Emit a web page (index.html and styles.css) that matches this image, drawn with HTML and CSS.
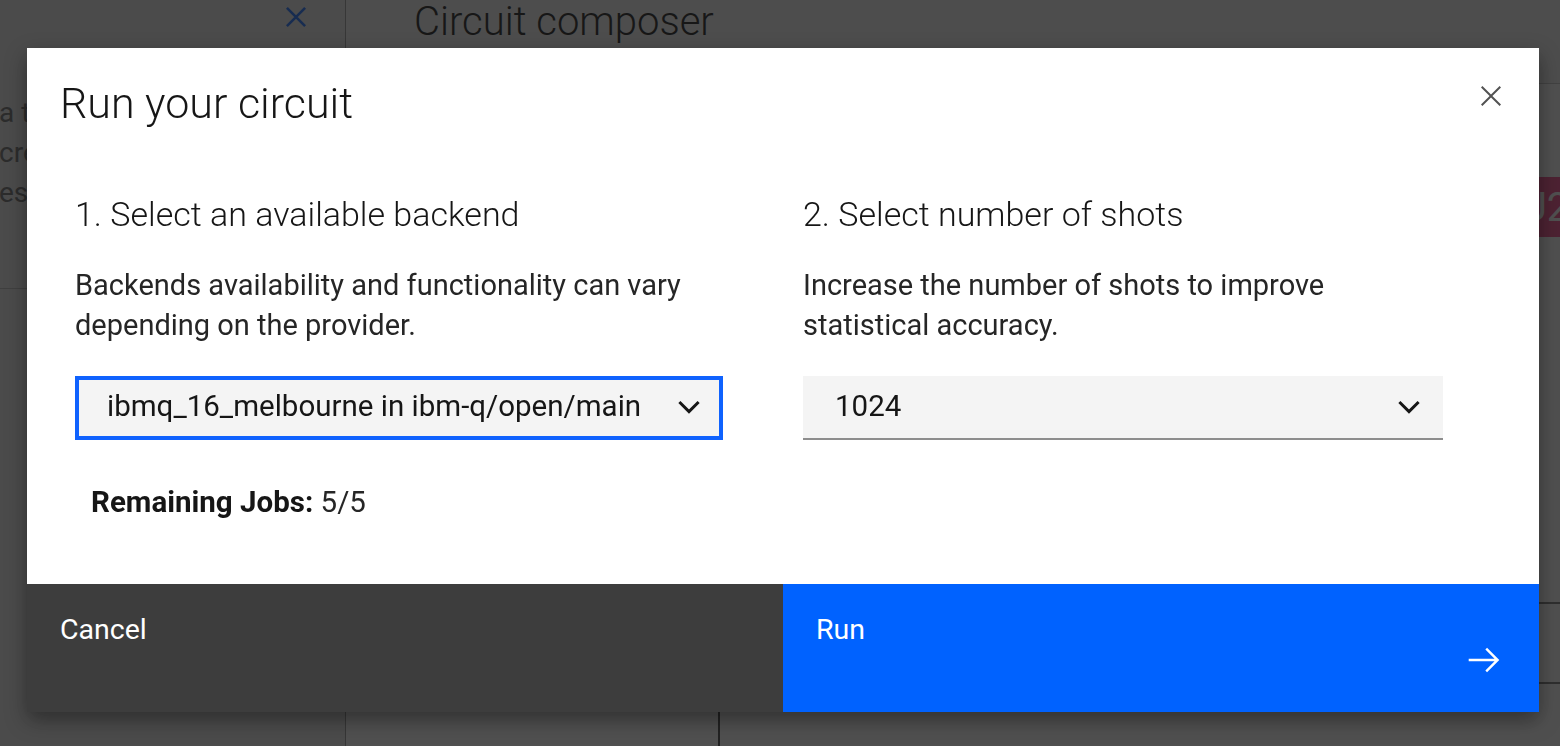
FILE: index.html
```html
<!DOCTYPE html>
<html lang="en">
<head>
<meta charset="utf-8">
<title>Run your circuit</title>
<link rel="stylesheet" href="styles.css">
</head>
<body>
<div class="app">
  <aside class="sidebar">
    <div class="sidebar-head">
      <button class="sidebar-close" aria-label="Close panel">
        <svg viewBox="0 0 20 20"><path d="M3 3L17 17M17 3L3 17"/></svg>
      </button>
    </div>
    <div class="sidebar-text">
      <span class="sidebar-line">a to</span>
      <span class="sidebar-line">cre</span>
      <span class="sidebar-line">es</span>
    </div>
    <div class="sidebar-rule"></div>
  </aside>
  <main class="workspace">
    <header class="ws-head"><h1 class="ws-title">Circuit composer</h1></header>
    <div class="ws-body">
      <div class="ws-panel"></div>
      <div class="ws-canvas">
        <div class="gate-row"><div class="gate">U2</div></div>
        <div class="wire wire-first"></div>
        <div class="wire wire-next"></div>
      </div>
    </div>
  </main>
</div>

<div class="backdrop">
  <div class="modal" role="dialog" aria-labelledby="modal-title">
    <div class="modal-header">
      <h2 class="modal-title" id="modal-title">Run your circuit</h2>
    </div>
    <button class="modal-close" aria-label="Close">
      <svg viewBox="0 0 20 20"><path d="M15 5.7L14.3 5 10 9.3 5.7 5 5 5.7 9.3 10 5 14.3 5.7 15 10 10.7 14.3 15 15 14.3 10.7 10z"/></svg>
    </button>
    <div class="modal-body">
      <section class="col">
        <h3 class="col-title">1. Select an available backend</h3>
        <p class="col-text">Backends availability and functionality can vary depending on the provider.</p>
        <div class="select select-focus">
          <span class="select-value">ibmq_16_melbourne in ibm-q/open/main</span>
          <svg class="chevron" viewBox="0 0 16 16"><path d="M3.2 6L8 10.8 12.8 6"/></svg>
        </div>
        <p class="jobs"><strong>Remaining Jobs:</strong> 5/5</p>
      </section>
      <section class="col">
        <h3 class="col-title">2. Select number of shots</h3>
        <p class="col-text">Increase the number of shots to improve statistical accuracy.</p>
        <div class="select select-line">
          <span class="select-value">1024</span>
          <svg class="chevron" viewBox="0 0 16 16"><path d="M3.2 6L8 10.8 12.8 6"/></svg>
        </div>
      </section>
    </div>
    <div class="modal-footer">
      <button class="btn btn-secondary"><span>Cancel</span></button>
      <button class="btn btn-primary"><span>Run</span>
        <svg class="btn-icon" viewBox="0 0 20 20"><path d="M11.8 2.8L10.8 3.8 16.2 9.3 1 9.3 1 10.7 16.2 10.7 10.8 16.2 11.8 17.2 19 10z"/></svg>
      </button>
    </div>
  </div>
</div>
</body>
</html>
```

FILE: styles.css
```css
* { box-sizing: border-box; }

html, body {
  margin: 0;
  padding: 0;
}

body {
  width: 1560px;
  height: 746px;
  overflow: hidden;
  font-family: Roboto, "Liberation Sans", Arial, sans-serif;
  background: #ffffff;
  color: #161616;
}

/* ---------- background page ---------- */
.app {
  display: flex;
  height: 746px;
}

.sidebar {
  width: 346px;
  flex: none;
  background: #ebebeb;
  border-right: 1px solid #9a9a9a;
  display: flex;
  flex-direction: column;
}

.sidebar-head {
  display: flex;
  justify-content: flex-end;
  padding-right: 31px;
}

.sidebar-close {
  width: 36px;
  height: 34px;
  padding: 0;
  border: 0;
  background: none;
  display: flex;
  align-items: center;
  justify-content: center;
}

.sidebar-close svg {
  width: 26px;
  height: 26px;
  fill: none;
  stroke: #1f70ff;
  stroke-width: 2;
}

.sidebar-text {
  margin-top: 59px;
  margin-left: -1px;
  display: flex;
  flex-direction: column;
  font-size: 28px;
  line-height: 40px;
  color: #6f6f6f;
  white-space: nowrap;
}

.sidebar-rule {
  margin-top: 75px;
  border-top: 1px solid #bdbdbd;
}

.workspace {
  flex: 1;
  display: flex;
  flex-direction: column;
  min-width: 0;
}

.ws-head {
  height: 84px;
  flex: none;
  background: #f2f2f2;
  border-bottom: 1px solid #c6c6c6;
  padding-left: 68px;
}

.ws-title {
  margin: 0;
  font-size: 40px;
  font-weight: 300;
  line-height: 44px;
  color: #1c1c1c;
}

.ws-body {
  flex: 1;
  display: flex;
}

.ws-panel {
  width: 374px;
  flex: none;
  border-right: 2px solid #4a4a4a;
}

.ws-canvas {
  flex: 1;
  display: flex;
  flex-direction: column;
  background: #fcfcfc;
}

.gate-row {
  margin-top: 93px;
  display: flex;
  justify-content: flex-end;
  margin-right: -25px;
}

.gate {
  width: 80px;
  height: 60px;
  background: #f24a8a;
  color: #ffffff;
  font-size: 40px;
  display: flex;
  align-items: center;
  justify-content: center;
}

.wire {
  height: 2px;
  background: #7a7a7a;
}

.wire-first { margin-top: 365px; }
.wire-next { margin-top: 78px; }

/* ---------- modal ---------- */
.backdrop {
  position: fixed;
  inset: 0;
  background: rgba(22, 22, 22, 0.75);
  display: flex;
  align-items: flex-start;
  padding: 48px 0 0 27px;
}

.modal {
  position: relative;
  width: 1512px;
  background: #ffffff;
  display: flex;
  flex-direction: column;
  box-shadow: 0 8px 20px rgba(0, 0, 0, 0.4);
}

.modal-header {
  padding: 31px 96px 0 33px;
}

.modal-title {
  margin: 0;
  font-size: 43px;
  font-weight: 300;
  line-height: 48px;
  color: #161616;
}

.modal-close {
  position: absolute;
  top: 0;
  right: 0;
  width: 96px;
  height: 96px;
  padding: 0;
  border: 0;
  background: none;
  display: flex;
  align-items: center;
  justify-content: center;
}

.modal-close svg {
  width: 40px;
  height: 40px;
  fill: #525252;
}

.modal-body {
  display: grid;
  grid-template-columns: 648px 640px;
  column-gap: 80px;
  align-items: start;
  padding: 67px 0 62px 48px;
}

.col {
  display: flex;
  flex-direction: column;
}

.col-title {
  margin: 0;
  font-size: 34px;
  font-weight: 300;
  line-height: 40px;
  color: #161616;
}

.col-text {
  margin: 31px 0 0;
  font-size: 29px;
  line-height: 40px;
  color: #262626;
}

.select {
  margin-top: 31px;
  height: 64px;
  background: #f4f4f4;
  display: flex;
  align-items: center;
  justify-content: space-between;
  padding: 0 18px 4px 32px;
}

.select-focus {
  box-shadow: inset 0 0 0 4px #0f62fe;
}

.select-line {
  border-bottom: 2px solid #8d8d8d;
  padding-bottom: 2px;
}

.select-value {
  font-size: 29.5px;
  line-height: 40px;
  color: #161616;
  white-space: nowrap;
}

.chevron {
  width: 32px;
  height: 32px;
  flex: none;
  fill: none;
  stroke: #161616;
  stroke-width: 1.5;
}

.jobs {
  margin: 42px 0 0;
  padding-left: 16px;
  font-size: 29.5px;
  line-height: 40px;
  color: #262626;
}

.jobs strong {
  font-weight: 700;
  color: #161616;
}

.modal-footer {
  display: grid;
  grid-template-columns: 1fr 1fr;
  height: 128px;
}

.btn {
  display: flex;
  justify-content: space-between;
  align-items: flex-start;
  padding: 26px 38px 35px 33px;
  border: 0;
  margin: 0;
  font-family: inherit;
  font-size: 28.5px;
  line-height: 40px;
  color: #ffffff;
  text-align: left;
}

.btn-secondary { background: #3d3d3d; }
.btn-primary { background: #0062ff; }

.btn-icon {
  align-self: flex-end;
  width: 34px;
  height: 34px;
  fill: #ffffff;
}
```
